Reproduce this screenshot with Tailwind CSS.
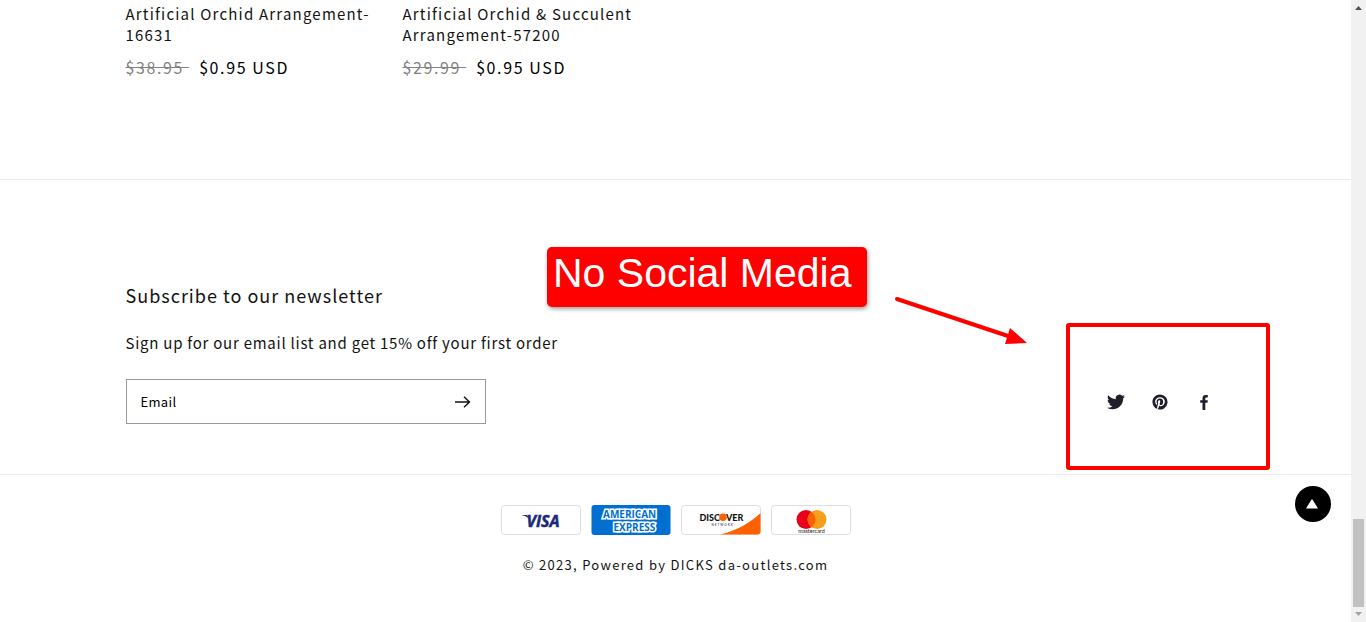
<!DOCTYPE html>
<html lang="en">
<head>
<meta charset="utf-8">
<meta name="viewport" content="width=device-width, initial-scale=1">
<title>DICKS da-outlets.com</title>
<script src="https://cdn.jsdelivr.net/npm/@tailwindcss/browser@4"></script>
</head>
<body class="bg-white">
<div class="relative flex min-h-screen overflow-hidden font-['Noto_Sans_CJK_SC','Noto_Sans',sans-serif] text-[#121212]">
  <div class="min-w-0 flex-1">
    <main class="mx-auto max-w-[1200px] px-[50px] pt-[3px] pb-[100px]">
      <ul class="grid grid-cols-4 gap-2">
        <li>
          <h3 class="text-[15px] leading-[21px] tracking-[0.08em]"><a href="#">Artificial Orchid Arrangement-<wbr>16631</a></h3>
          <p class="mt-2.5 flex gap-2.5 text-[16px] leading-6 tracking-[0.1em] text-black"><s class="whitespace-pre text-[#828282]">$38.95 </s><span>$0.95 USD</span></p>
        </li>
        <li>
          <h3 class="text-[15px] leading-[21px] tracking-[0.08em]"><a href="#">Artificial Orchid &amp; Succulent Arrangement-57200</a></h3>
          <p class="mt-2.5 flex gap-2.5 text-[16px] leading-6 tracking-[0.1em] text-black"><s class="whitespace-pre text-[#828282]">$29.99 </s><span>$0.95 USD</span></p>
        </li>
      </ul>
    </main>
    <footer>
      <div class="border-t border-[#ececec]">
        <div class="mx-auto flex max-w-[1200px] items-end justify-between px-[50px] pt-[101px] pb-[50px]">
          <form>
            <h2 class="text-[18px] leading-7 tracking-[1px]">Subscribe to our newsletter</h2>
            <p class="mt-[22px] text-[15px] leading-6 tracking-[0.05em]">Sign up for our email list and get 15% off your first order</p>
            <div class="mt-6 flex h-[45px] w-[360px] border border-[#999999]">
              <input type="email" aria-label="Email" placeholder="Email" class="min-w-0 flex-1 pl-3.5 text-[13px] tracking-wide placeholder:text-black outline-none">
              <button type="button" aria-label="Subscribe" class="flex w-11 items-center justify-center">
                <svg class="h-3 w-4" viewBox="0 0 16 12" fill="none" stroke="#121212" stroke-width="1.4"><path d="M0 6H14.500M9 0.700L14.500 6l-5.500 5.300"/></svg>
              </button>
            </div>
          </form>
          <ul class="flex text-[#1f1f2c]">
            <li><a href="#" aria-label="Twitter" class="flex h-11 w-11 items-center justify-center"><svg class="h-[18px] w-[18px]" viewBox="0 2 24 20" fill="currentColor"><path d="M23.950 4.570a10 10 0 0 1-2.820.770 4.960 4.960 0 0 0 2.160-2.720c-.950.550-2 .950-3.130 1.180a4.920 4.920 0 0 0-8.380 4.480C7.690 8.090 4.070 6.130 1.640 3.160a4.820 4.820 0 0 0-.670 2.480c0 1.710.870 3.210 2.190 4.100a4.900 4.900 0 0 1-2.230-.620v.060a4.920 4.920 0 0 0 3.950 4.830 5 5 0 0 1-2.210.080 4.940 4.940 0 0 0 4.600 3.420A9.870 9.870 0 0 1 0 19.540a13.990 13.990 0 0 0 7.550 2.210c9.050 0 14-7.500 14-13.980 0-.210 0-.420-.020-.630a9.940 9.940 0 0 0 2.460-2.550z"/></svg></a></li>
            <li><a href="#" aria-label="Pinterest" class="flex h-11 w-11 items-center justify-center"><svg class="h-4 w-4" viewBox="-0.700 -0.700 25.400 25.400" fill="currentColor"><path d="M12 0C5.370 0 0 5.370 0 12c0 5.080 3.160 9.430 7.630 11.170-.110-.950-.200-2.400.040-3.440l1.410-5.960s-.360-.720-.360-1.780c0-1.660.970-2.910 2.170-2.910 1.020 0 1.520.770 1.520 1.690 0 1.030-.650 2.570-.990 3.990-.290 1.190.600 2.170 1.770 2.170 2.130 0 3.770-2.250 3.770-5.490 0-2.860-2.060-4.870-5.010-4.870-3.410 0-5.410 2.560-5.410 5.200 0 1.030.390 2.140.890 2.740a.360.360 0 0 1 .080.340l-.330 1.360c-.050.220-.170.270-.400.160-1.500-.690-2.430-2.880-2.430-4.650 0-3.780 2.750-7.260 7.930-7.260 4.160 0 7.400 2.970 7.400 6.930 0 4.140-2.610 7.460-6.230 7.460-1.220 0-2.360-.630-2.750-1.380l-.750 2.850c-.270 1.050-1 2.350-1.500 3.150A12 12 0 1 0 12 0z"/></svg></a></li>
            <li><a href="#" aria-label="Facebook" class="flex h-11 w-11 items-center justify-center"><svg class="h-[15px] w-2" viewBox="0 0 8 15" fill="currentColor"><path d="M7.800.1v2.500H6.500c-.9 0-1.200.4-1.200 1.100v1.500h2.500l-.3 2.600H5.300V15H2.500V7.800H.2V5.200h2.300V3.200C2.500 1.100 3.800 0 5.700 0z"/></svg></a></li>
          </ul>
        </div>
      </div>
      <div class="border-t border-[#ececec] pt-[30px]">
        <ul class="flex justify-center gap-2.5">
          <li><svg class="h-[30px] w-20" viewBox="0 0 80 30" role="img" aria-label="Visa"><rect x=".5" y=".5" width="79" height="29" rx="3" fill="#fff" stroke="#dedede"/><text x="25.500" y="22" font-family="Open Sans" font-size="16" font-weight="700" font-style="italic" fill="#1a2a78" stroke="#1a2a78" stroke-width=".5">VISA</text><path d="M20.500 10h5.500l2.500 4c-2-2-4.500-3.300-8-4z" fill="#1a2a78"/></svg></li>
          <li><svg class="h-[30px] w-20" viewBox="0 0 80 30" role="img" aria-label="American Express"><rect x=".5" width="79" height="30" rx="3" fill="#006fcf"/><g font-family="Open Sans" font-size="10" font-weight="700" fill="#006fcf" stroke="#fff" stroke-width="3.200" paint-order="stroke"><text x="12" y="12.500">AMERICAN</text><text x="22.500" y="26">EXPRESS</text></g></svg></li>
          <li><svg class="h-[30px] w-20" viewBox="0 0 80 30" role="img" aria-label="Discover Network"><rect x=".5" y=".5" width="79" height="29" rx="3" fill="#fff" stroke="#dedede"/><path d="M39 29.500C55 26 69 18 79.500 8v18.500q0 3-3 3z" fill="#ff6000"/><g font-family="Lato" font-size="9" font-weight="900" fill="#111"><text x="18.500" y="15.500">DISC</text><text x="45" y="15.500">VER</text></g><circle cx="42" cy="12.300" r="3.800" fill="#ff6000"/><text x="30.500" y="20.500" font-family="Lato" font-size="3" letter-spacing="1" fill="#111">NETWORK</text></svg></li>
          <li><svg class="h-[30px] w-20" viewBox="0 0 80 30" role="img" aria-label="Mastercard"><rect x=".5" y=".5" width="79" height="29" rx="3" fill="#fff" stroke="#dedede"/><circle cx="35" cy="14.500" r="9.500" fill="#eb001b"/><circle cx="46" cy="14.500" r="9.500" fill="#f79e1b"/><path d="M40.500 6.800a9.500 9.500 0 0 1 0 15.400a9.500 9.500 0 0 1 0-15.400z" fill="#ff5f00"/><text x="40.500" y="28" text-anchor="middle" font-family="Lato" font-size="5.500" fill="#222">mastercard</text></svg></li>
        </ul>
        <p class="mt-5 text-center text-[13px] leading-5 tracking-[0.1em]">© 2023, Powered by <a href="#">DICKS da-outlets.com</a></p>
      </div>
    </footer>
  </div>

  <div class="flex w-[15px] shrink-0 flex-col items-center justify-between bg-[#f1f1f1]" aria-hidden="true">
    <svg class="mt-1.5 h-1 w-[7px]" viewBox="0 0 7 4"><path d="M0 4L3.500 0L7 4z" fill="#505050"/></svg>
    <div class="flex flex-col items-center">
      <div class="h-[88px] w-[11px] bg-[#c1c1c1]"></div>
      <svg class="mt-[5px] mb-1.5 h-1 w-[7px]" viewBox="0 0 7 4"><path d="M0 0L3.500 4L7 0z" fill="#a3a3a3"/></svg>
    </div>
  </div>

  <button type="button" aria-label="Back to top" class="absolute right-[35px] top-[486px] flex h-9 w-9 items-center justify-center rounded-full bg-black">
    <svg class="h-[10px] w-[14px]" viewBox="0 0 14 10"><path d="M5.500 0.500H6.500L12 9.500H0z" fill="#fff"/></svg>
  </button>

  <div class="absolute left-[547px] top-[247px] h-[60px] w-[320px] whitespace-nowrap rounded-[5px] bg-[#ff0000] pl-1.5 font-['Liberation_Sans',sans-serif] text-[41px] leading-[52px] text-white shadow-[1px_2px_4px_rgba(0,0,0,0.4)]">No Social Media</div>
  <svg class="absolute left-[890px] top-[290px] h-[60px] w-[140px]" viewBox="0 0 140 60" aria-hidden="true"><path d="M7 9L118 46" stroke="#f00" stroke-width="4" stroke-linecap="round"/><path d="M120 38L137 53L115 54z" fill="#f00"/></svg>
  <div class="absolute left-[1066px] top-[323px] h-[147px] w-[204px] rounded-[3px] border-4 border-[#ff0000]"></div>
</div>
</body>
</html>
